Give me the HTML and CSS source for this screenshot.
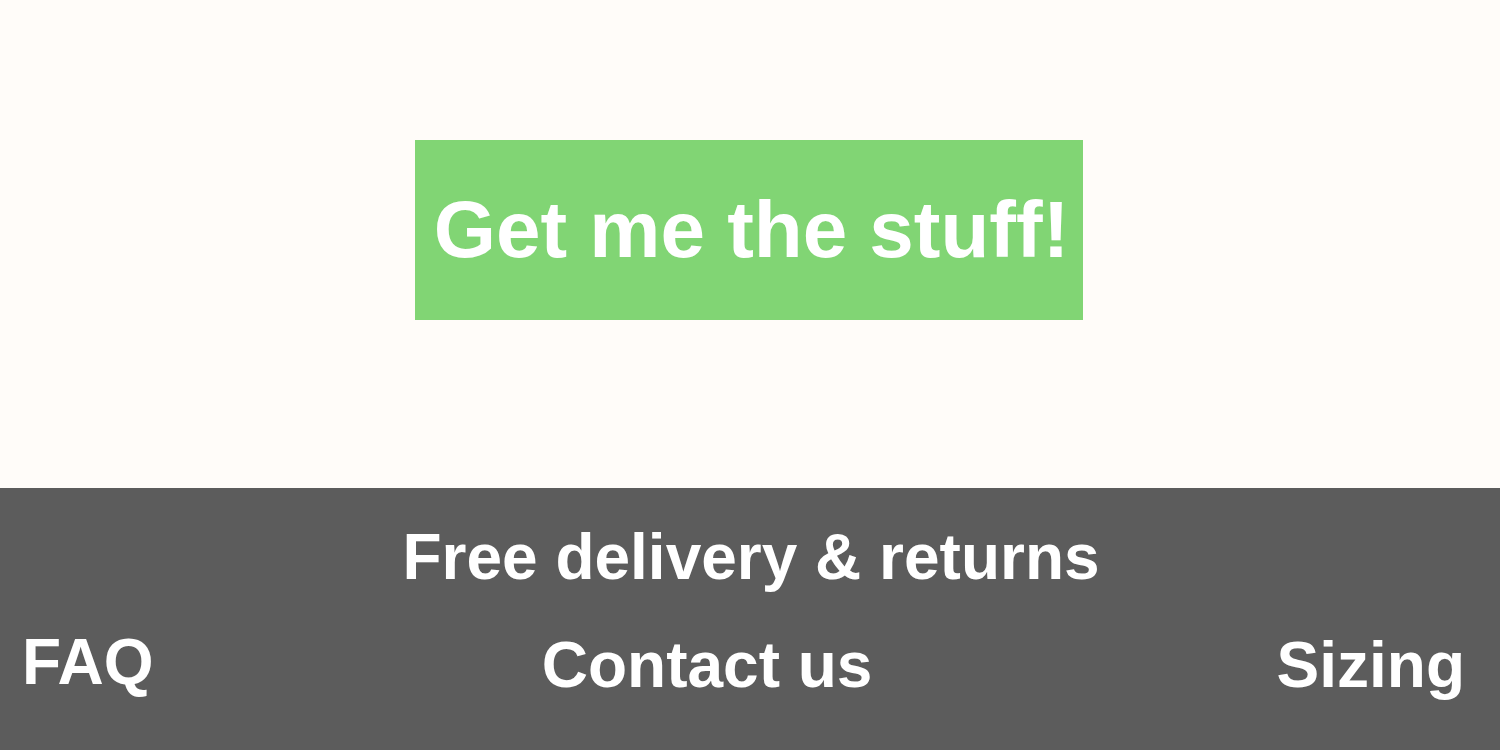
FILE: index.html
```html
<!DOCTYPE html>
<html lang="en">
<head>
<meta charset="utf-8">
<title>Get me the stuff!</title>
<link rel="stylesheet" href="styles.css">
</head>
<body>
<main class="hero">
  <a class="cta" href="#">Get me the stuff!</a>
</main>
<footer class="footer">
  <div class="footer-top">Free delivery &amp; returns</div>
  <nav class="footer-links">
    <a class="link link-faq" href="#">FAQ</a>
    <a class="link link-contact" href="#">Contact us</a>
    <a class="link link-sizing" href="#">Sizing</a>
  </nav>
</footer>
</body>
</html>
```

FILE: styles.css
```css
html, body {
  margin: 0;
  padding: 0;
}

body {
  background: #fffcf9;
  font-family: "Liberation Sans", Arial, Helvetica, sans-serif;
  font-weight: bold;
  color: #ffffff;
}

.hero {
  height: 488px;
  box-sizing: border-box;
  padding-top: 140px;
  display: flex;
  justify-content: center;
  align-items: flex-start;
}

.cta {
  display: flex;
  align-items: center;
  justify-content: center;
  box-sizing: border-box;
  width: 668px;
  height: 180px;
  padding-left: 5px;
  margin-right: 2px;
  background: #81d574;
  color: #ffffff;
  text-decoration: none;
  font-size: 80px;
}

.footer {
  background: #5c5c5c;
  height: 262px;
  box-sizing: border-box;
  padding: 32px 35px 0 22px;
  display: flex;
  flex-direction: column;
}

.footer-top {
  font-size: 64px;
  text-align: center;
  padding-left: 15px;
}

.footer-links {
  margin-top: 34px;
  display: flex;
  justify-content: space-between;
  align-items: baseline;
}

.link {
  color: #ffffff;
  text-decoration: none;
  font-size: 64px;
}

.link-faq {
  position: relative;
  top: -3px;
}

.link-contact {
  margin-right: 16px;
}
```
